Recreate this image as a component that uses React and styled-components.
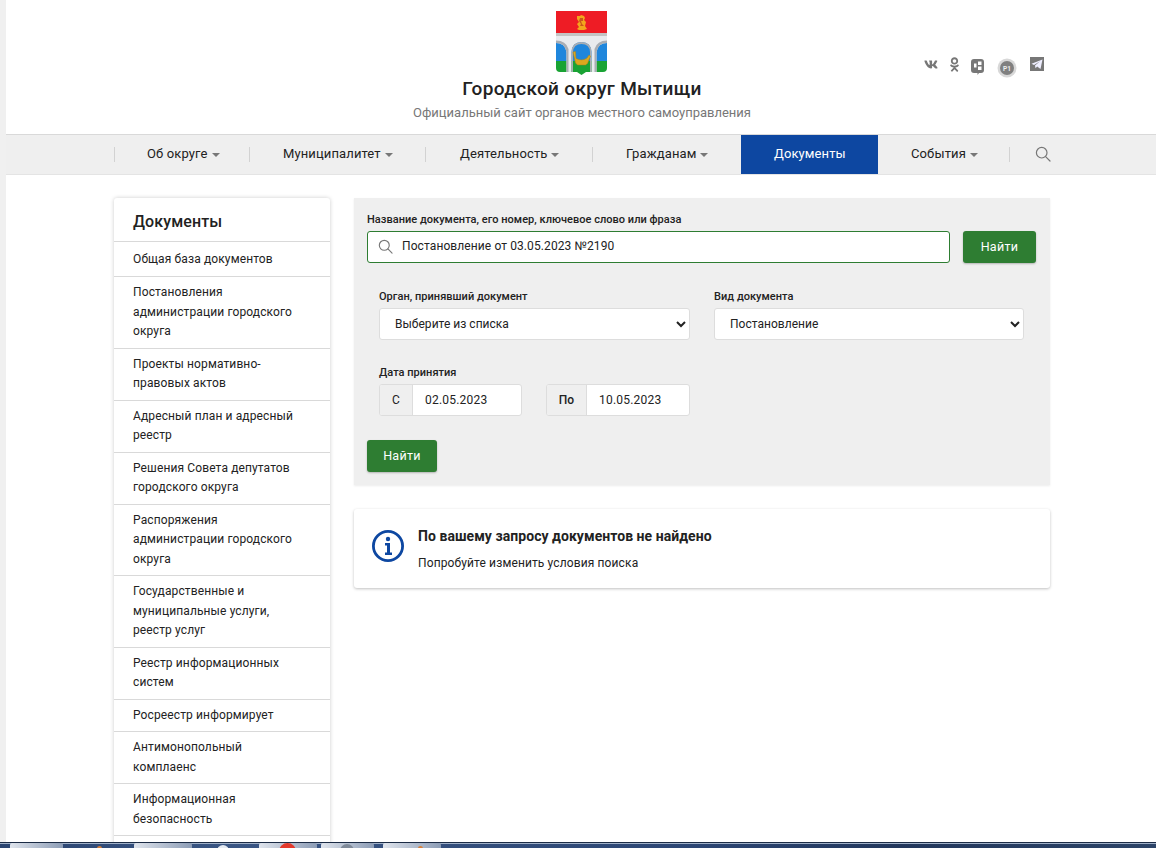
import React from "react";
import styled, { createGlobalStyle } from "styled-components";
import { FaVk, FaOdnoklassniki } from "react-icons/fa";

const Global = createGlobalStyle`
  html, body { margin: 0; padding: 0; background: #fff; }
  body { font-family: Roboto, "Liberation Sans", sans-serif; color: #222; }
  * { box-sizing: border-box; }
`;

const Screen = styled.div`
  width: 1156px; height: 848px; overflow: hidden; display: flex; flex-direction: column;
`;
const Browser = styled.div`
  flex: 1; min-height: 0; overflow: hidden; border-left: 6px solid #f0f0f0; display: flex; flex-direction: column;
`;
const Header = styled.header`
  height: 135px; flex: none; display: flex; padding-left: 108px; border-bottom: 1px solid #d9d9d9;
`;
const Brand = styled.div`
  width: 936px; padding-top: 11px; position: relative; display: flex; flex-direction: column; align-items: center;
`;
const Logo = styled.svg` width: 51px; height: 64px; display: block; margin-right: 1px; `;
const SiteTitle = styled.div`
  font-size: 19px; font-weight: 500; line-height: 24px; margin-top: 2px; color: #222; letter-spacing: 0.33px;
`;
const SiteSub = styled.div`
  font-size: 13px; line-height: 18px; color: #777; margin-top: 3px;
`;
const Socials = styled.div`
  position: absolute; left: 810px; top: 57px; display: flex; align-items: flex-start; gap: 12px;
`;
const SocialIcon = styled.svg`
  display: block; color: #777; flex: none; margin-top: ${p => p.$y}px; margin-left: ${p => p.$x || 0}px;
`;
const VkIcon = styled(FaVk)` display: block; color: #777; flex: none; font-size: 15px; width: 14px; margin-top: 0; `;
const OkIcon = styled(FaOdnoklassniki)` display: block; color: #777; flex: none; font-size: 15px; width: 9px; margin-top: 0; `;

const NavBar = styled.nav`
  height: 40px; flex: none; background: #efefef; border-bottom: 1px solid #e4e4e4; padding-left: 108px; display: flex;
`;
const NavItem = styled.div`
  height: 39px; width: ${p => p.$w}px; flex: none; display: flex; align-items: center; gap: 4px;
  padding-left: ${p => p.$pl}px; padding-bottom: 2px; position: relative; font-size: 13px; letter-spacing: 0.12px;
  background: ${p => p.$active ? "#0d47a1" : "transparent"};
  color: ${p => p.$active ? "#fff" : "#222"};
  &::before {
    content: ""; display: ${p => p.$sep ? "block" : "none"}; position: absolute; left: 0; top: 12px; width: 1px; height: 15px; background: #d2d2d2;
  }
`;
const Caret = styled.span`
  width: 0; height: 0; border-left: 4px solid transparent; border-right: 4px solid transparent; border-top: 4px solid #777; margin-top: 2px;
`;
const NavSearch = styled.div`
  position: relative; height: 39px; flex: none; width: 60px; display: flex; align-items: center; padding-left: 26px; padding-bottom: 1px;
  &::before { content: ""; position: absolute; left: 0; top: 12px; width: 1px; height: 15px; background: #d2d2d2; }
`;

const Content = styled.div`
  flex: 1; min-height: 0; padding: 23px 0 0 108px; display: flex; gap: 24px; align-items: flex-start;
`;
const Sidebar = styled.aside`
  width: 216px; flex: none; background: #fff; border-radius: 3px 3px 0 0; box-shadow: 0 0 4px rgba(0,0,0,.2);
`;
const SideTitle = styled.div`
  height: 44px; padding: 3px 19px 0; display: flex; align-items: center; font-size: 16px; font-weight: 500; border-bottom: 1px solid #d9d9d9; color: #222; letter-spacing: 0.1px;
`;
const SideLink = styled.div`
  padding: 6px 19px; line-height: 19.5px; font-size: 12px; color: #222; border-bottom: 1px solid #d9d9d9; letter-spacing: 0.12px;
  ${SideTitle} + & { padding-top: 8px; padding-bottom: 6.5px; }
`;
const SideStub = styled.div` height: 20px; `;
const Main = styled.main` width: 696px; flex: none; display: flex; flex-direction: column; gap: 24px; `;
const Panel = styled.section`
  background: #efefef; height: 287px; padding: 15px 14px 0 13px; box-shadow: 0 1px 2px rgba(0,0,0,.08);
`;
const Label = styled.div`
  font-size: 11px; line-height: 13px; font-weight: 500; color: #222; letter-spacing: 0.03px;
`;
const SearchRow = styled.div` display: flex; gap: 13px; margin-top: 5px; align-items: flex-start; `;
const SearchBox = styled.div`
  flex: 1; height: 32px; border: 1px solid #2e7d32; border-radius: 3px; background: #fff;
  display: flex; align-items: center; padding: 0 0 2px 10px; gap: 9px; font-size: 12px; letter-spacing: 0.1px;
`;
const GreenButton = styled.button`
  width: ${p => p.$w}px; height: 32px; border: none; border-radius: 3px; background: #2e7d32; color: #fff; display: block;
  font-family: inherit; font-size: 12.5px; letter-spacing: 0.3px; box-shadow: 0 1px 2px rgba(0,0,0,.25); padding: 0 0 2px;
`;
const Filters = styled.div`
  display: grid; grid-template-columns: 311px 310px; gap: 24px; padding: 27px 0 0 12px;
`;
const Field = styled.div` display: flex; flex-direction: column; gap: 5px; `;
const Select = styled.select`
  width: 100%; height: 32px; border: 1px solid #ddd; border-radius: 3px; background: #fff; font-family: inherit; font-size: 12px;
  color: #222; padding-left: 11px; letter-spacing: 0.02px;
`;
const DateBlock = styled.div` display: flex; flex-direction: column; gap: 5px; padding: 26px 0 0 12px; `;
const DateRow = styled.div` display: flex; gap: 24px; `;
const DateGroup = styled.div`
  width: ${p => p.$w}px; height: 32px; display: flex; border: 1px solid #ddd; border-radius: 3px; overflow: hidden; background: #fff;
`;
const DateAddon = styled.div`
  width: ${p => p.$w}px; flex: none; background: #efefef; border-right: 1px solid #ddd; display: flex; align-items: center; justify-content: center;
  font-size: 12px; font-weight: ${p => p.$bold ? 500 : 400}; padding-bottom: 1px;
`;
const DateValue = styled.div`
  flex: 1; display: flex; align-items: center; padding: 0 0 1px 12px; font-size: 12px; letter-spacing: 0.22px;
`;
const SubmitWrap = styled.div` margin-top: 24px; `;
const ResultCard = styled.section`
  height: 79px; background: #fff; border-radius: 3px; box-shadow: 0 1px 3px rgba(0,0,0,.25); display: flex; align-items: flex-start; padding: 20px 0 0 18px; gap: 14px;
`;
const ResultIcon = styled.svg` width: 32px; height: 32px; flex: none; margin-top: 1px; display: block; `;
const ResultBody = styled.div` display: flex; flex-direction: column; `;
const ResultTitle = styled.div` font-size: 14px; font-weight: 700; line-height: 15px; color: #222; letter-spacing: 0.05px; `;
const ResultText = styled.div` font-size: 12px; line-height: 15px; margin-top: 12px; color: #222; letter-spacing: 0.12px; `;

const Taskbar = styled.div`
  height: 6px; flex: none; display: flex; background: linear-gradient(90deg,#2a4470 0%,#3a5684 20%,#2c4674 60%,#22375c 78%,#2c4468 100%);
  border-top: 1px solid #1b2b45; box-shadow: inset 0 1px 0 #9fb0c8; padding-left: 10px;
`;
const TaskTab = styled.div`
  width: ${p => p.$w}px; margin-right: ${p => p.$gap}px; flex: none; height: 5px; border-radius: 2px 2px 0 0;
  background: ${p => p.$on ? "linear-gradient(90deg,#dfe4ec,#8d9db6)" : "transparent"}; position: relative; overflow: hidden;
`;
const TaskDot = styled.span`
  position: absolute; left: ${p => p.$x}px; top: ${p => p.$t}px; width: ${p => p.$s}px; height: ${p => p.$s}px; border-radius: 50%; background: ${p => p.$c};
`;

const menu = [
  ["Общая база документов"],
  ["Постановления", "администрации городского", "округа"],
  ["Проекты нормативно-", "правовых актов"],
  ["Адресный план и адресный", "реестр"],
  ["Решения Совета депутатов", "городского округа"],
  ["Распоряжения", "администрации городского", "округа"],
  ["Государственные и", "муниципальные услуги,", "реестр услуг"],
  ["Реестр информационных", "систем"],
  ["Росреестр информирует"],
  ["Антимонопольный", "комплаенс"],
  ["Информационная", "безопасность"],
];

const nav = [
  { t: "Об округе", w: 135, pl: 33, sep: true, caret: true },
  { t: "Муниципалитет", w: 176, pl: 34, sep: true, caret: true },
  { t: "Деятельность", w: 167, pl: 35, sep: true, caret: true },
  { t: "Гражданам", w: 149, pl: 34, sep: true, caret: true },
  { t: "Документы", w: 137, pl: 33, active: true },
  { t: "События", w: 131, pl: 33, caret: true },
];

const Magnifier = ({ size = 16, color = "#777" }) => (
  <svg width={size} height={size} viewBox="0 0 16 16" fill="none" stroke={color} strokeWidth="1.2" style={{ display: "block", flex: "none" }}>
    <circle cx="6.7" cy="6.7" r="5.3" />
    <path d="M10.6 10.6 15 15" strokeLinecap="round" />
  </svg>
);

export default function App() {
  return (
    <Screen>
      <Global />
      <Browser>
        <Header>
          <Brand>
            <Logo viewBox="0 0 51 64">
              <path d="M0 0H51V57Q51 61 47 61H30L25.500 64 21 61H4Q0 61 0 57Z" fill="#19a334" />
              <rect width="51" height="22" fill="#ee1c25" />
              <rect y="22" width="51" height="3" fill="#c4c4c4" />
              <rect y="25" width="51" height="25" fill="#1f86dc" />
              <path d="M0 25H51V32Q42 32 40.500 41V61H35.500V41Q35 31 25.500 31 16 31 15.500 41V61H10.500V41Q9 32 0 32Z" fill="#e9ebee" />
              <path d="M0 29.500Q10 29.500 12.500 38V61H10.500V41Q9 32 0 32ZM51 29.500Q41 29.500 38.500 38V61H40.500V41Q42 32 51 32ZM15.500 61V41Q16 31 25.500 31 35 31 35.500 41V61H34V41Q33.500 33 25.500 33 17.500 33 17 41V61Z" fill="#a9adb3" />
              <path d="M17 41l2.500-.5.500 7q6 3 11-.5l2-3 1.500 1-3 7.500-2 1.500h-8l-2-2Z" fill="#dba71f" stroke="#a88314" strokeWidth=".5" />
              <path d="M21 5h3l1-1 3 1 1 2-1 2 2 2-1 4 2 3-3 1h-5l-2-1 2-2-2-3 2-2-2-3Z" fill="#f3a71c" />
              <path d="M24 7h3v3h-2l1 3 2 2h-4l1-2-2-3Z" fill="#c9591a" />
            </Logo>
            <SiteTitle>Городской округ Мытищи</SiteTitle>
            <SiteSub>Официальный сайт органов местного самоуправления</SiteSub>
            <Socials>
              <VkIcon />
              <OkIcon />
              <SocialIcon width="13" height="16" viewBox="0 0 13 16" $y={2}>
                <path d="M3 0h7q3 0 3 3v8q0 3-3 3H8l-1.500 2V14H3q-3 0-3-3V3q0-3 3-3Z" fill="currentColor" />
                <rect x="7" y="2.500" width="3.500" height="3.500" fill="#fff" />
                <rect x="7" y="7.500" width="3.500" height="3.500" fill="#fff" />
                <rect x="3" y="4.500" width="2.500" height="4" fill="#fff" />
              </SocialIcon>
              <SocialIcon width="20" height="20" viewBox="0 0 20 20" $y={1} $x={1}>
                <circle cx="10" cy="10" r="9.500" fill="#d8d8d8" />
                <circle cx="10" cy="10" r="7" fill="#808080" />
                <text x="10" y="12.500" fontSize="6.500" fontWeight="700" textAnchor="middle" fill="#eee" fontFamily="Roboto">P1</text>
              </SocialIcon>
              <SocialIcon width="14" height="14" viewBox="0 0 14 14" $y={0} $x={1}>
                <rect width="14" height="14" fill="currentColor" />
                <path d="M1.500 6.800 12.500 2.500 10.500 12 7.200 9.500 5.500 11.200 5 8.500 10 4.300 4 8Z" fill="#eef" />
              </SocialIcon>
            </Socials>
          </Brand>
        </Header>
        <NavBar>
          {nav.map(n => (
            <NavItem key={n.t} $w={n.w} $pl={n.pl} $sep={n.sep} $active={n.active}>
              {n.t}{n.caret && <Caret />}
            </NavItem>
          ))}
          <NavSearch><Magnifier /></NavSearch>
        </NavBar>
        <Content>
          <Sidebar>
            <SideTitle>Документы</SideTitle>
            {menu.map(lines => (
              <SideLink key={lines.join()}>
                {lines.map(l => <div key={l}>{l}</div>)}
              </SideLink>
            ))}
            <SideStub />
          </Sidebar>
          <Main>
            <Panel>
              <Label>Название документа, его номер, ключевое слово или фраза</Label>
              <SearchRow>
                <SearchBox><Magnifier size={15} />Постановление от 03.05.2023 №2190</SearchBox>
                <GreenButton $w={73}>Найти</GreenButton>
              </SearchRow>
              <Filters>
                <Field>
                  <Label>Орган, принявший документ</Label>
                  <Select defaultValue="a"><option value="a">Выберите из списка</option></Select>
                </Field>
                <Field>
                  <Label>Вид документа</Label>
                  <Select defaultValue="b"><option value="b">Постановление</option></Select>
                </Field>
              </Filters>
              <DateBlock>
                <Label>Дата принятия</Label>
                <DateRow>
                  <DateGroup $w={143}><DateAddon $w={33}>С</DateAddon><DateValue>02.05.2023</DateValue></DateGroup>
                  <DateGroup $w={144}><DateAddon $w={40} $bold>По</DateAddon><DateValue>10.05.2023</DateValue></DateGroup>
                </DateRow>
              </DateBlock>
              <SubmitWrap><GreenButton $w={70}>Найти</GreenButton></SubmitWrap>
            </Panel>
            <ResultCard>
              <ResultIcon viewBox="0 0 32 32">
                <circle cx="16" cy="16" r="14.600" fill="none" stroke="#0d47a1" strokeWidth="2.800" />
                <circle cx="16" cy="9" r="2.200" fill="#0d47a1" />
                <path d="M13 13h5v9.500h2V25h-7v-2.500h2V15.500h-2Z" fill="#0d47a1" />
              </ResultIcon>
              <ResultBody>
                <ResultTitle>По вашему запросу документов не найдено</ResultTitle>
                <ResultText>Попробуйте изменить условия поиска</ResultText>
              </ResultBody>
            </ResultCard>
          </Main>
        </Content>
      </Browser>
      <Taskbar>
        <TaskTab $w={53} $gap={5} $on />
        <TaskTab $w={61} $gap={5}><TaskDot $x={29} $t={3} $s={5} $c="#d9803a" /></TaskTab>
        <TaskTab $w={58} $gap={1} $on />
        <TaskTab $w={65} $gap={1}><TaskDot $x={24} $t={2} $s={12} $c="#e6ebf2" /></TaskTab>
        <TaskTab $w={58} $gap={4} $on><TaskDot $x={20} $t={0} $s={17} $c="#e3392b" /></TaskTab>
        <TaskTab $w={53} $gap={9} $on><TaskDot $x={19} $t={1} $s={14} $c="#7f8a99" /></TaskTab>
        <TaskTab $w={58} $gap={0} $on><TaskDot $x={35} $t={3} $s={5} $c="#d9803a" /></TaskTab>
      </Taskbar>
    </Screen>
  );
}
